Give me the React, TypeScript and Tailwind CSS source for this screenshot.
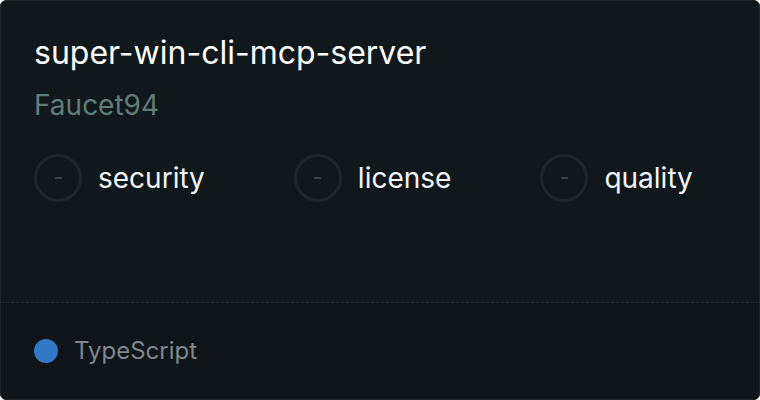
const badges = ["security", "license", "quality"];

function Badge({ label }: { label: string }) {
  return (
    <div className="flex items-center gap-4">
      <div className="flex h-12 w-12 items-center justify-center rounded-full border-[3px] border-[#1f2629]">
        <div className="h-[2px] w-[7px] bg-[#3a4246]" />
      </div>
      <span className="text-[28px] leading-[48px] text-[#f3f4f5]">{label}</span>
    </div>
  );
}

export default function App() {
  return (
    <div className="h-[400px] w-[760px] bg-white font-['Inter',sans-serif]">
      <div className="flex h-full w-full flex-col overflow-hidden rounded-[6px] border border-[#1e2528] bg-[#11181b]">
        <div className="flex flex-1 flex-col px-[33px] pt-[30px]">
          <h1 className="text-[32px] leading-[44px] text-white">super-win-cli-mcp-server</h1>
          <div className="mt-[14px] text-[28px] leading-[32px] text-[#5f7d77]">Faucet94</div>
          <div className="mt-[33px] flex gap-[89px]">
            {badges.map((b) => (
              <Badge key={b} label={b} />
            ))}
          </div>
        </div>
        <div className="flex h-[97px] items-center gap-4 border-t border-dashed border-[#242b2f] bg-[#0e1417] px-[33px]">
          <div className="h-6 w-6 rounded-full bg-[#3178c6]" />
          <span className="text-[24px] text-[#80878c]">TypeScript</span>
        </div>
      </div>
    </div>
  );
}
